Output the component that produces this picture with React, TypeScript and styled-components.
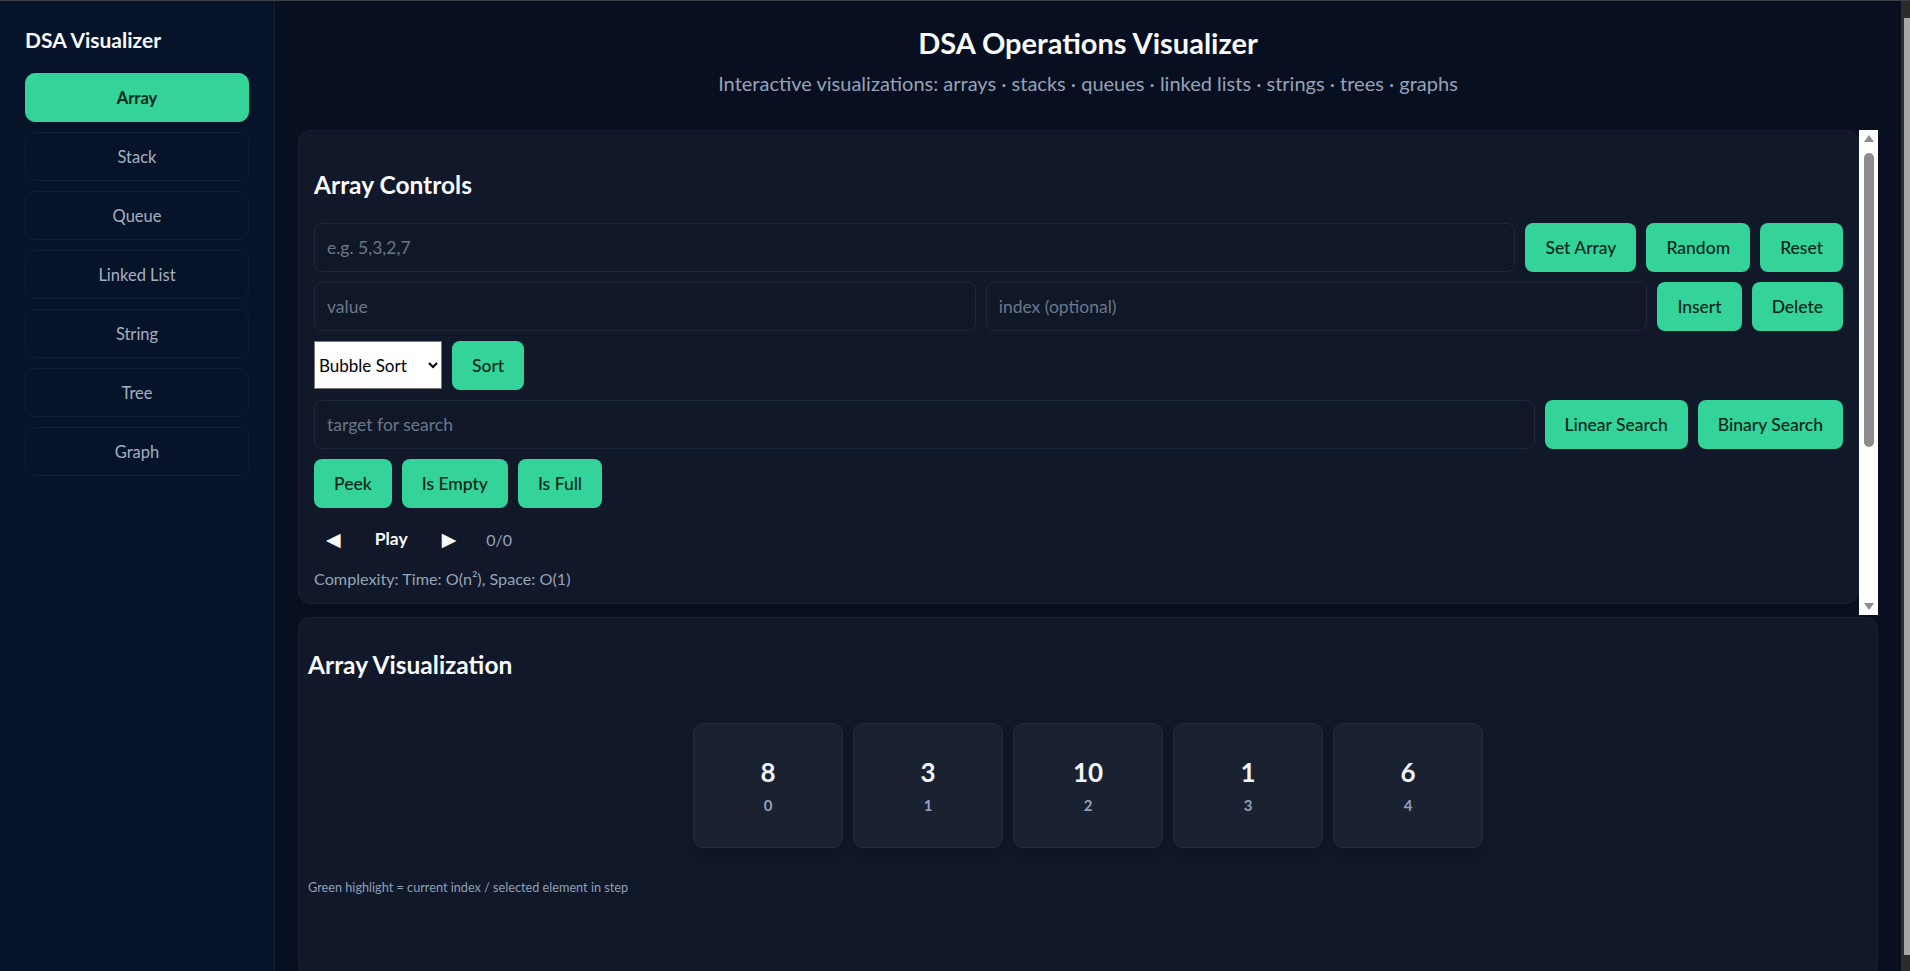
import * as React from "react";
import styled, { createGlobalStyle } from "styled-components";

const GlobalStyle = createGlobalStyle`
  * { box-sizing: border-box; }
  html { background: #080f20; }
  body {
    margin: 0;
    border-top: 1px solid #3b4047;
    background: #080f20;
    color: #e5e7eb;
    font-family: "Segoe UI", Lato, "Noto Sans", sans-serif;
  }
`;

const Layout = styled.div`
  display: grid;
  grid-template-columns: 275px 1fr 9px;
  min-height: 100vh;
`;

const Sidebar = styled.aside`
  background: #071329;
  border-right: 1px solid #142038;
  padding: 26px 25px;
`;

const Brand = styled.h3`
  margin: 0 0 20px;
  font-size: 21px;
  line-height: 26px;
  font-weight: 700;
  color: #f8fafc;
`;

const NavList = styled.nav`
  display: flex;
  flex-direction: column;
  gap: 10px;
`;

const NavButton = styled.button<{ $active?: boolean }>`
  height: 49px;
  border-radius: 10px;
  border: 1px solid ${(p) => (p.$active ? "#34d399" : "#131d33")};
  background: ${(p) => (p.$active ? "#34d399" : "transparent")};
  color: ${(p) => (p.$active ? "#06281b" : "#a3b0c2")};
  font-family: inherit;
  font-size: 16.5px;
  font-weight: ${(p) => (p.$active ? 700 : 400)};
  cursor: pointer;
`;

const Main = styled.main`
  display: flex;
  flex-direction: column;
  padding: 0 23px 24px;
  min-width: 0;
`;

/* the browser's own page scrollbar, as it shows at the right edge */
const PageScrollbar = styled.div`
  position: sticky;
  top: 0;
  height: 100vh;
  display: flex;
  flex-direction: column;
  padding: 17px 0 17px 3px;
  background: #2c2c2c;
`;

const PageThumb = styled.div`
  flex: 1;
  background: #a6a6a6;
`;

const Header = styled.header`
  text-align: center;
  padding-top: 25px;
  margin-bottom: 35px;
`;

const Title = styled.h1`
  margin: 0;
  font-size: 29px;
  line-height: 34px;
  font-weight: 700;
  color: #f8fafc;
`;

const Subtitle = styled.p`
  margin: 11px 0 0;
  font-size: 20px;
  line-height: 24px;
  color: #94a3b8;
`;

const ControlsBox = styled.div`
  display: flex;
  height: 485px;
  overflow: hidden;
`;

const ControlsPane = styled.div`
  flex: 1;
  min-width: 0;
`;

/* drawn scroll rail of the controls box */
const Rail = styled.div`
  width: 19px;
  flex-shrink: 0;
  display: grid;
  grid-template-rows: 17px 297px 1fr 17px;
  row-gap: 3px;
  justify-items: center;
  background: #ffffff;
`;

const RailArrow = styled.div<{ $down?: boolean }>`
  width: 100%;
  display: flex;
  align-items: center;
  justify-content: center;

  &::after {
    content: "";
    border-left: 5px solid transparent;
    border-right: 5px solid transparent;
    ${(p) => (p.$down ? "border-top" : "border-bottom")}: 7px solid #8c8c8c;
  }
`;

const RailThumb = styled.div`
  width: 10px;
  margin-top: 3px;
  border-radius: 5px;
  background: #8c8c8c;
`;

const RailSpacer = styled.div`
  width: 100%;
`;

const Panel = styled.section<{ $pad: number }>`
  background: #111829;
  border: 1px solid #172036;
  border-radius: 12px;
  padding: ${(p) => p.$pad}px;
`;

const VizPanel = styled(Panel)`
  margin-top: 2px;
  min-height: 360px;
`;

const PanelTitle = styled.h2`
  margin: 24px 0 23px;
  font-size: 24.5px;
  line-height: 30px;
  font-weight: 700;
  color: #f8fafc;
`;

const VizTitle = styled(PanelTitle)`
  margin: 23px 0 13px;
`;

const Stack = styled.div`
  display: flex;
  flex-direction: column;
  gap: 10px;
`;

const Row = styled.div`
  display: flex;
  gap: 10px;
  align-items: stretch;
`;

const TextInput = styled.input`
  flex: 1;
  min-width: 0;
  height: 49px;
  padding: 0 12px;
  background: #101828;
  border: 1px solid #1e283d;
  border-radius: 8px;
  color: #e5e7eb;
  font-family: inherit;
  font-size: 17.5px;
  outline: none;

  &::placeholder { color: #6b7689; }
`;

const ActionButton = styled.button`
  height: 49px;
  padding: 0 20px;
  background: #34d399;
  border: none;
  border-radius: 8px;
  color: #05241a;
  font-family: inherit;
  font-size: 17.5px;
  font-weight: 500;
  white-space: nowrap;
  cursor: pointer;
`;

const AlgoSelect = styled.select`
  width: 128px;
  height: 48px;
  padding: 0;
  background: #ffffff;
  border: 1px solid #767676;
  border-radius: 0;
  color: #000000;
  font-family: inherit;
  font-size: 17px;
`;

const StepRow = styled.div`
  display: flex;
  align-items: center;
  gap: 10px;
  height: 42px;
`;

const StepButton = styled.button<{ $bold?: boolean }>`
  padding: 8px 12px;
  background: transparent;
  border: none;
  color: #f8fafc;
  font-family: ${(p) => (p.$bold ? "inherit" : "\"DejaVu Sans\", sans-serif")};
  font-size: ${(p) => (p.$bold ? "17.5px" : "19px")};
  line-height: 22px;
  font-weight: ${(p) => (p.$bold ? 700 : 400)};
  cursor: pointer;
`;

const StepCounter = styled.span`
  margin-left: 8px;
  font-size: 16px;
  color: #8fa1ba;
`;

const Complexity = styled.div`
  font-size: 16.2px;
  line-height: 18px;
  color: #94a3b8;
`;

const CellsArea = styled.div`
  display: flex;
  justify-content: center;
  gap: 10px;
  padding: 30px 0;
`;

const Cell = styled.div`
  width: 150px;
  height: 125px;
  display: flex;
  flex-direction: column;
  align-items: center;
  justify-content: center;
  gap: 9px;
  background: #1a2131;
  border: 1px solid #232b3c;
  border-radius: 10px;
  box-shadow: 0 6px 14px rgba(0, 0, 0, 0.22);
`;

const CellValue = styled.div`
  font-size: 26px;
  line-height: 30px;
  font-weight: 700;
  color: #f1f5f9;
`;

const CellIndex = styled.div`
  font-size: 15px;
  line-height: 18px;
  font-weight: 700;
  color: #8ea2bf;
`;

const Legend = styled.div`
  font-size: 12.7px;
  line-height: 18px;
  color: #8fa0b8;
`;

const navItems = ["Array", "Stack", "Queue", "Linked List", "String", "Tree", "Graph"];
const values = [8, 3, 10, 1, 6];

function App() {
  return (
    <>
      <GlobalStyle />
      <Layout>
        <Sidebar>
          <Brand>DSA Visualizer</Brand>
          <NavList>
            {navItems.map((item) => (
              <NavButton key={item} $active={item === "Array"}>
                {item}
              </NavButton>
            ))}
          </NavList>
        </Sidebar>

        <Main>
          <Header>
            <Title>DSA Operations Visualizer</Title>
            <Subtitle>
              Interactive visualizations: arrays · stacks · queues · linked lists · strings · trees · graphs
            </Subtitle>
          </Header>

          <ControlsBox>
            <ControlsPane>
              <Panel $pad={15}>
                <PanelTitle>Array Controls</PanelTitle>
                <Stack>
                  <Row>
                    <TextInput placeholder="e.g. 5,3,2,7" />
                    <ActionButton>Set Array</ActionButton>
                    <ActionButton>Random</ActionButton>
                    <ActionButton>Reset</ActionButton>
                  </Row>
                  <Row>
                    <TextInput placeholder="value" />
                    <TextInput placeholder="index (optional)" />
                    <ActionButton>Insert</ActionButton>
                    <ActionButton>Delete</ActionButton>
                  </Row>
                  <Row>
                    <AlgoSelect defaultValue="bubble">
                      <option value="bubble">Bubble Sort</option>
                      <option value="selection">Selection Sort</option>
                      <option value="insertion">Insertion Sort</option>
                      <option value="merge">Merge Sort</option>
                      <option value="quick">Quick Sort</option>
                    </AlgoSelect>
                    <ActionButton>Sort</ActionButton>
                  </Row>
                  <Row>
                    <TextInput placeholder="target for search" />
                    <ActionButton>Linear Search</ActionButton>
                    <ActionButton>Binary Search</ActionButton>
                  </Row>
                  <Row>
                    <ActionButton>Peek</ActionButton>
                    <ActionButton>Is Empty</ActionButton>
                    <ActionButton>Is Full</ActionButton>
                  </Row>
                  <StepRow>
                    <StepButton>◀</StepButton>
                    <StepButton $bold>Play</StepButton>
                    <StepButton>▶</StepButton>
                    <StepCounter>0/0</StepCounter>
                  </StepRow>
                  <Complexity>Complexity: Time: O(n²), Space: O(1)</Complexity>
                </Stack>
              </Panel>
            </ControlsPane>
            <Rail>
              <RailArrow />
              <RailThumb />
              <RailSpacer />
              <RailArrow $down />
            </Rail>
          </ControlsBox>

          <VizPanel $pad={9}>
            <VizTitle>Array Visualization</VizTitle>
            <CellsArea>
              {values.map((v, i) => (
                <Cell key={i}>
                  <CellValue>{v}</CellValue>
                  <CellIndex>{i}</CellIndex>
                </Cell>
              ))}
            </CellsArea>
            <Legend>Green highlight = current index / selected element in step</Legend>
          </VizPanel>
        </Main>

        <PageScrollbar>
          <PageThumb />
        </PageScrollbar>
      </Layout>
    </>
  );
}

export default App;
